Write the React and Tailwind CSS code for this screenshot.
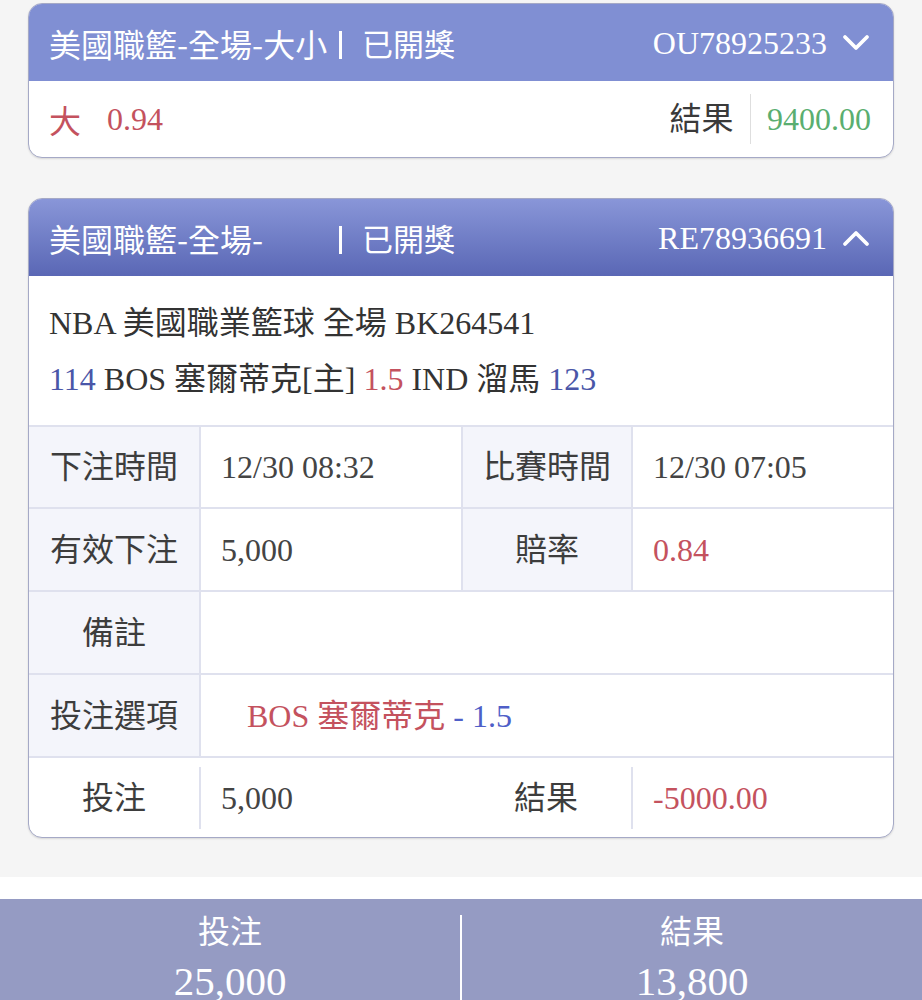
import React from "react";

const FONT = { fontFamily: '"Liberation Serif", "Noto Sans CJK TC", serif' };
const SANS = { fontFamily: '"Noto Sans CJK TC", "Noto Sans", sans-serif' };

function Chevron({ up }) {
  return (
    <svg width="30" height="18" viewBox="0 0 30 18" className="shrink-0">
      {up ? (
        <polyline points="4,15 15,4 26,15" fill="none" stroke="white" strokeWidth="3.8" strokeLinecap="round" strokeLinejoin="round" />
      ) : (
        <polyline points="4,3 15,14 26,3" fill="none" stroke="white" strokeWidth="3.8" strokeLinecap="round" strokeLinejoin="round" />
      )}
    </svg>
  );
}

function Header({ title, code, up, gradient }) {
  return (
    <div
      className={
        "h-[77px] flex items-center pl-[20px] pr-[22px] text-white " +
        (gradient ? "bg-gradient-to-b from-[#8996d8] to-[#5a67b5]" : "bg-[#808fd3]")
      }
    >
      <span className="w-[288px] whitespace-nowrap text-[32px] leading-[44px]" style={SANS}>
        {title}
      </span>
      <span className="w-[3px] h-[28px] bg-white ml-[2px] mt-[4px]" />
      <span className="ml-[20px] text-[31px] leading-[44px]" style={SANS}>已開獎</span>
      <span className="ml-auto text-[32px] leading-[44px] mr-[14px]">{code}</span>
      <Chevron up={up} />
    </div>
  );
}

const line = "border-[#dfe1ee]";

function Label({ children, className = "" }) {
  return (
    <div className={"w-[170px] shrink-0 flex items-center justify-center bg-[#f4f5fb] text-[32px] text-[#3d3d3d] " + className}>
      {children}
    </div>
  );
}

export default function App() {
  return (
    <div className="w-[922px] min-h-[1000px] bg-white overflow-hidden" style={FONT}>
      <div className="bg-[#f5f5f5] pt-[3px] pb-[39px] px-[28px] flex flex-col gap-[40px]">
        {/* Card 1 */}
        <div className="rounded-[14px] border-[1.5px] border-[#a5a9c6] overflow-hidden bg-white shadow-[0_1px_2px_rgba(0,0,0,0.12)]">
          <Header title="美國職籃-全場-大小" code="OU78925233" />
          <div className="h-[76px] flex items-center pl-[20px] pr-[22px]">
            <span className="text-[#c4525e] text-[32px]" style={SANS}>大</span>
            <span className="text-[#c4525e] text-[32px] ml-[26px]">0.94</span>
            <span className="ml-auto text-[32px] text-[#3a3a3a]">結果</span>
            <span className="w-[1.5px] h-[50px] bg-[#dedede] mx-[16px]" />
            <span className="text-[32px] text-[#5aae70]">9400.00</span>
          </div>
        </div>

        {/* Card 2 */}
        <div className="rounded-[14px] border-[1.5px] border-[#a5a9c6] overflow-hidden bg-white shadow-[0_1px_2px_rgba(0,0,0,0.12)]">
          <Header title="美國職籃-全場-" code="RE78936691" up gradient />
          <div className="pt-[19px] pb-[18px] pl-[20px] text-[32px] leading-[56px] text-[#333]">
            <div>NBA 美國職業籃球 全場 BK264541</div>
            <div>
              <span className="text-[#4a56a8]">114</span> BOS 塞爾蒂克[主] <span className="text-[#c4525e]">1.5</span> IND 溜馬{" "}
              <span className="text-[#4a56a8]">123</span>
            </div>
          </div>

          <div className={"flex h-[82px] border-t-2 " + line}>
            <Label>下注時間</Label>
            <div className={"w-[262px] shrink-0 border-l-2 flex items-center pl-[20px] text-[32px] text-[#444] " + line}>12/30 08:32</div>
            <Label className={"border-l-2 " + line}>比賽時間</Label>
            <div className={"flex-1 border-l-2 flex items-center pl-[20px] text-[32px] text-[#444] " + line}>12/30 07:05</div>
          </div>
          <div className={"flex h-[83px] border-t-2 " + line}>
            <Label>有效下注</Label>
            <div className={"w-[262px] shrink-0 border-l-2 flex items-center pl-[20px] text-[32px] text-[#444] " + line}>5,000</div>
            <Label className={"border-l-2 " + line}>賠率</Label>
            <div className={"flex-1 border-l-2 flex items-center pl-[20px] text-[32px] text-[#c4525e] " + line}>0.84</div>
          </div>
          <div className={"flex h-[83px] border-t-2 " + line}>
            <Label>備註</Label>
            <div className={"flex-1 border-l-2 " + line} />
          </div>
          <div className={"flex h-[83px] border-t-2 " + line}>
            <Label>投注選項</Label>
            <div className={"flex-1 border-l-2 flex items-center pl-[46px] text-[32px] " + line}>
              <span className="text-[#c4525e]">BOS 塞爾蒂克</span>
              <span className="text-[#4f5fc8] ml-[8px]">- 1.5</span>
            </div>
          </div>
          <div className={"flex h-[81px] border-t-2 items-center " + line}>
            <div className="w-[170px] shrink-0 flex items-center justify-center text-[32px] text-[#3d3d3d]">投注</div>
            <span className="w-[2px] h-[62px] bg-[#dfe1ee]" />
            <div className="w-[260px] shrink-0 pl-[20px] text-[32px] text-[#444]">5,000</div>
            <div className="w-[170px] shrink-0 flex items-center justify-center text-[32px] text-[#3d3d3d]">結果</div>
            <span className="w-[2px] h-[62px] bg-[#dfe1ee]" />
            <div className="flex-1 pl-[20px] text-[32px] text-[#c4525e]">-5000.00</div>
          </div>
        </div>
      </div>

      <div className="h-[22px] bg-white" />

      <div className="bg-[#959bc3] h-[130px] flex text-white">
        <div className="flex-1 flex flex-col items-center pt-[10px]">
          <span className="text-[32px] leading-[40px]" style={SANS}>投注</span>
          <span className="text-[41px] leading-[48px] mt-[8px]">25,000</span>
        </div>
        <span className="w-[2px] h-[120px] bg-white mt-[16px]" />
        <div className="flex-1 flex flex-col items-center pt-[10px]">
          <span className="text-[32px] leading-[40px]" style={SANS}>結果</span>
          <span className="text-[41px] leading-[48px] mt-[8px]">13,800</span>
        </div>
      </div>
    </div>
  );
}
